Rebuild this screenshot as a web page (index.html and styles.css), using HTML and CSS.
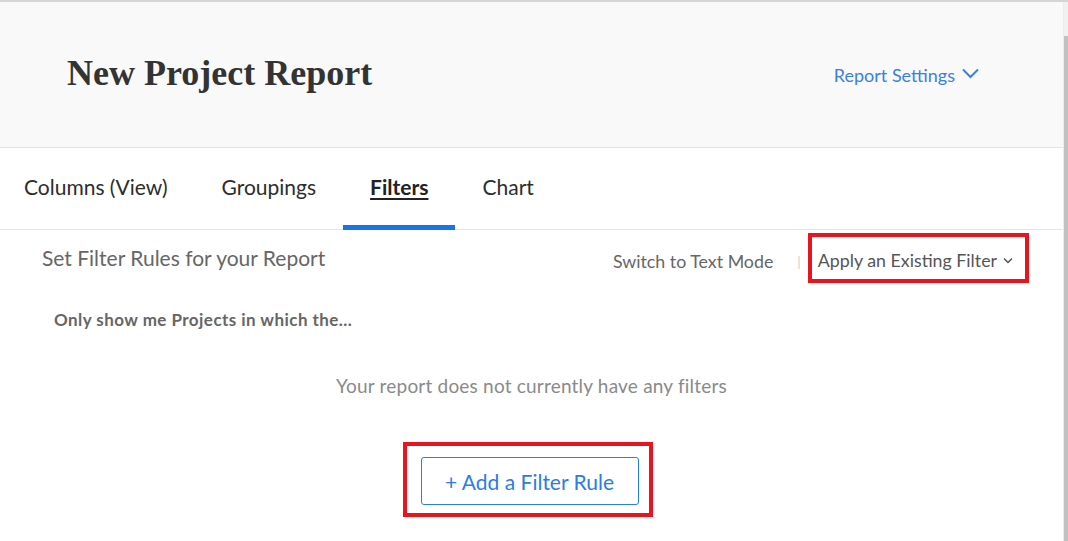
FILE: index.html
```html
<!DOCTYPE html>
<html lang="en">
<head>
<meta charset="utf-8">
<title>New Project Report</title>
<link rel="stylesheet" href="styles.css">
</head>
<body>
<div class="page">
  <div class="main">
    <header class="header">
      <h1 class="title">New Project Report</h1>
      <a class="settings" href="#">Report Settings
        <svg class="settings-chev" width="17" height="11" viewBox="0 0 17 11"><path d="M1 1.5 L8.5 9 L16 1.5" fill="none" stroke="currentColor" stroke-width="2"/></svg>
      </a>
    </header>
    <nav class="tabs">
      <a class="tab tab-first" href="#">Columns (View)</a>
      <a class="tab" href="#">Groupings</a>
      <a class="tab tab-active" href="#">Filters</a>
      <a class="tab" href="#">Chart</a>
    </nav>
    <section class="filters">
      <div class="filters-top">
        <h2 class="filters-title">Set Filter Rules for your Report</h2>
        <div class="actions">
          <a class="text-mode" href="#">Switch to Text Mode</a>
          <span class="sep">|</span>
          <div class="annot annot-apply">
            <a class="apply" href="#">Apply an Existing Filter
              <svg class="apply-chev" width="10" height="7" viewBox="0 0 10 7"><path d="M1 1.5 L5 5.5 L9 1.5" fill="none" stroke="currentColor" stroke-width="1.5"/></svg>
            </a>
          </div>
        </div>
      </div>
      <p class="lead">Only show me Projects in which the...</p>
      <p class="empty">Your report does not currently have any filters</p>
      <div class="add-row">
        <div class="annot annot-btn">
          <button class="add-btn" type="button">+ Add a Filter Rule</button>
        </div>
      </div>
    </section>
  </div>
  <div class="scrollbar"><div class="thumb"></div></div>
</div>
</body>
</html>
```

FILE: styles.css
```css
html, body {
  margin: 0;
  padding: 0;
  height: 100%;
  overflow: hidden;
  background: #ffffff;
}

body {
  font-family: "Lato", "Open Sans", Arial, sans-serif;
  color: #333;
}

a { text-decoration: none; }

.page {
  display: flex;
  height: 541px;
  border-top: 2px solid #d5d5d5;
  box-sizing: border-box;
}

.main {
  flex: 1;
  min-width: 0;
  border-right: 1px solid #ececec;
}

.scrollbar {
  width: 4px;
  background: #f1f1f1;
  display: flex;
  flex-direction: column;
  padding-top: 34px;
}

.thumb {
  flex: 1;
  background: #c1c1c1;
}

/* Header */
.header {
  height: 145px;
  background: #f9f9f9;
  border-bottom: 1px solid #e4e4e4;
  display: flex;
  align-items: center;
  justify-content: space-between;
  padding: 0 84px 0 67px;
}

.title {
  margin: 0;
  font-family: "Liberation Serif", "Times New Roman", serif;
  font-weight: bold;
  font-size: 36px;
  color: #333;
  padding-bottom: 4px;
}

.settings {
  color: #3b7fe0;
  font-size: 18px;
  display: flex;
  align-items: center;
  gap: 7px;
  padding-top: 1px;
}

.settings-chev { margin-top: -3px; }

/* Tabs */
.tabs {
  display: flex;
  height: 81px;
  border-bottom: 1px solid #e6e6e6;
}

.tab {
  display: flex;
  align-items: center;
  padding: 0 27px;
  font-size: 21px;
  color: #2d2d2d;
  border-bottom: 5px solid transparent;
  margin-bottom: -1px;
}

.tab-first { padding-left: 24px; }

.tab-active {
  font-weight: bold;
  color: #222;
  text-decoration: underline;
  text-underline-offset: 3px;
  text-decoration-thickness: 2px;
  border-bottom-color: #1a73e8;
}

/* Filters */
.filters {
  padding-top: 3px;
}

.filters-top {
  display: flex;
  align-items: center;
  justify-content: space-between;
  padding: 0 34px 0 42px;
}

.filters-title {
  margin: 0;
  font-weight: normal;
  font-size: 21px;
  color: #666;
  margin-top: -2px;
}

.actions {
  display: flex;
  align-items: center;
}

.text-mode {
  color: #666;
  font-size: 17.8px;
  padding-top: 6px;
}

.sep {
  color: #d0d0d0;
  font-size: 14px;
  margin: 0 7px 0 24px;
  padding-top: 6px;
}

.annot {
  border: 4px solid #e8141f;
}

.annot-apply {
  padding: 12px 12px 8px 6px;
}

.apply {
  color: #555;
  font-size: 17.8px;
  display: flex;
  align-items: center;
  gap: 6px;
}

.lead {
  margin: 26px 0 0 54px;
  font-weight: bold;
  font-size: 17px;
  letter-spacing: 0.45px;
  color: #666;
}

.empty {
  margin: 44px 0 0;
  text-align: center;
  font-size: 19px;
  letter-spacing: 0.2px;
  color: #8a8a8a;
}

.add-row {
  display: flex;
  justify-content: center;
  margin-top: 45px;
  padding-right: 8px;
}

.annot-btn {
  padding: 11px 10px 8px 14px;
}

.add-btn {
  width: 218px;
  height: 48px;
  background: #fff;
  border: 1px solid #2a7de1;
  border-radius: 3px;
  color: #2a7de1;
  font-family: inherit;
  font-size: 21px;
  cursor: pointer;
}
```
